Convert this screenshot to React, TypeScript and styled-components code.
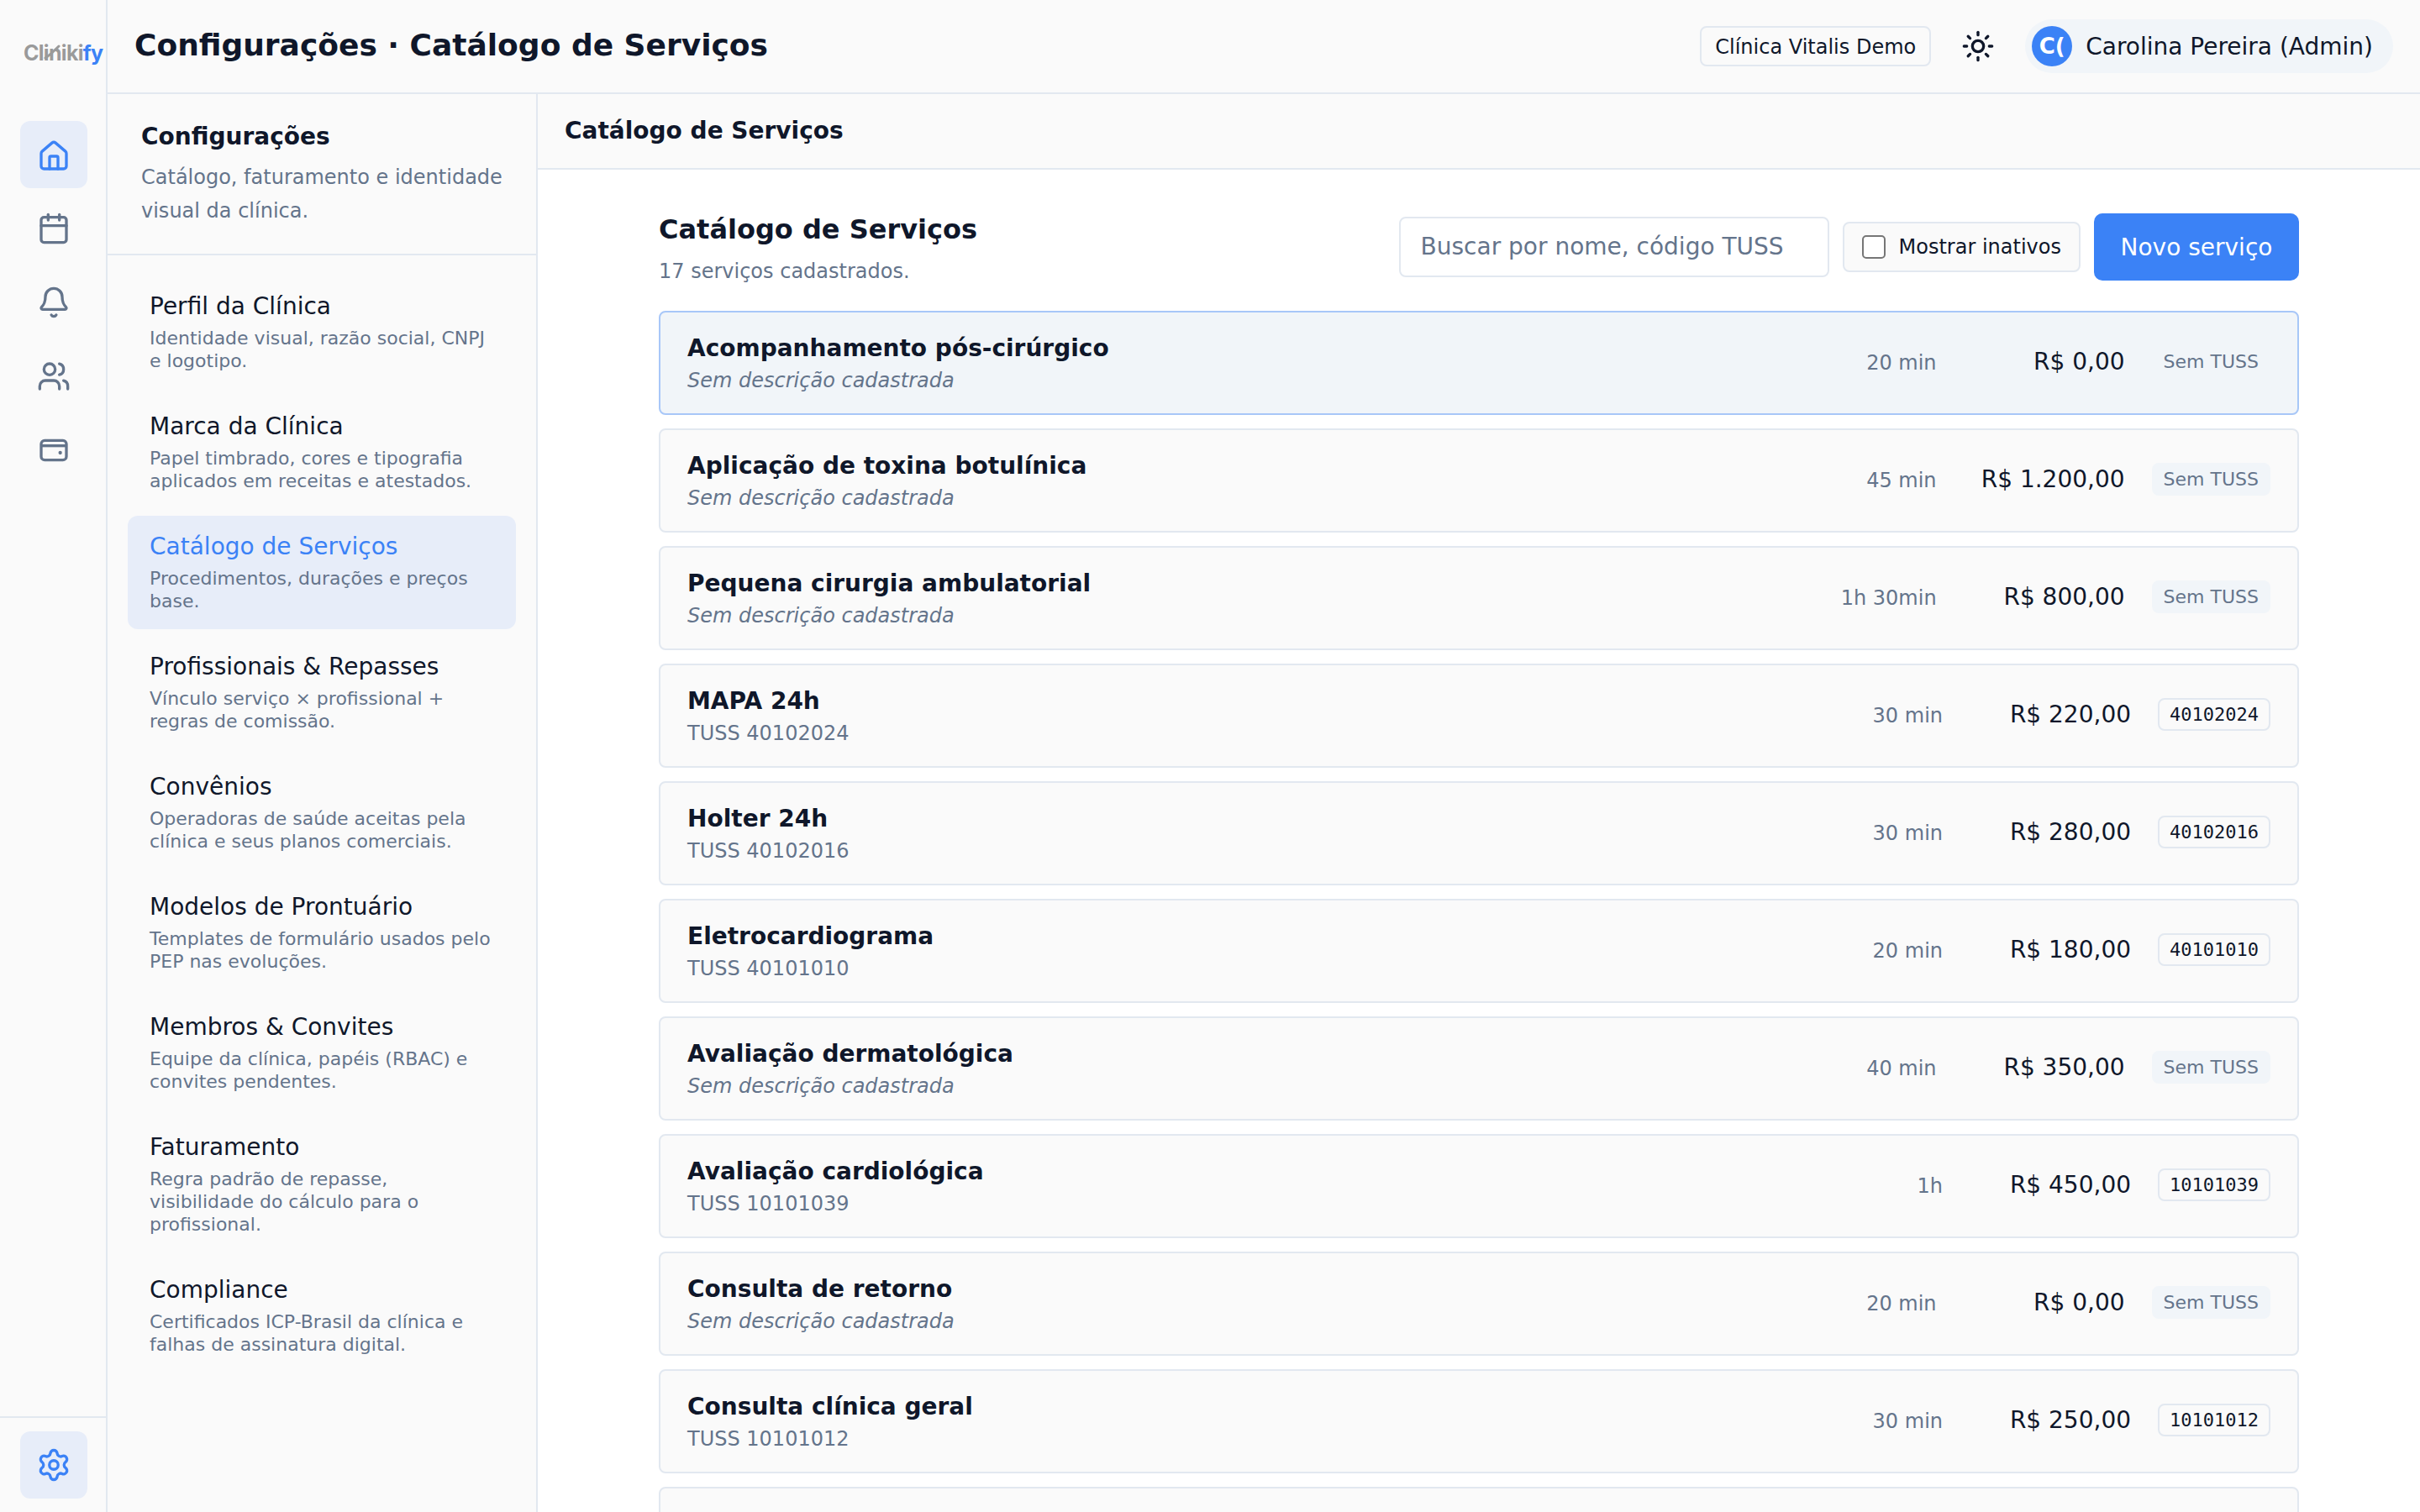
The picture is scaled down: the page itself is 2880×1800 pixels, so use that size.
import React from 'react';
import styled, { createGlobalStyle } from 'styled-components';
import { Bell, Calendar, House, Settings, Sun, Users } from 'lucide-react';

const sections = [
  { title: 'Perfil da Clínica', text: 'Identidade visual, razão social, CNPJ e logotipo.' },
  { title: 'Marca da Clínica', text: 'Papel timbrado, cores e tipografia aplicados em receitas e atestados.' },
  { title: 'Catálogo de Serviços', text: 'Procedimentos, durações e preços base.', active: true },
  { title: 'Profissionais & Repasses', text: 'Vínculo serviço × profissional + regras de comissão.' },
  { title: 'Convênios', text: 'Operadoras de saúde aceitas pela clínica e seus planos comerciais.' },
  { title: 'Modelos de Prontuário', text: 'Templates de formulário usados pelo PEP nas evoluções.' },
  { title: 'Membros & Convites', text: 'Equipe da clínica, papéis (RBAC) e convites pendentes.' },
  { title: 'Faturamento', text: 'Regra padrão de repasse, visibilidade do cálculo para o profissional.' },
  { title: 'Compliance', text: 'Certificados ICP-Brasil da clínica e falhas de assinatura digital.' }
];

const services = [
  { name: 'Acompanhamento pós-cirúrgico', duration: '20 min', price: 'R$ 0,00', selected: true },
  { name: 'Aplicação de toxina botulínica', duration: '45 min', price: 'R$ 1.200,00' },
  { name: 'Pequena cirurgia ambulatorial', duration: '1h 30min', price: 'R$ 800,00' },
  { name: 'MAPA 24h', duration: '30 min', price: 'R$ 220,00', tuss: '40102024' },
  { name: 'Holter 24h', duration: '30 min', price: 'R$ 280,00', tuss: '40102016' },
  { name: 'Eletrocardiograma', duration: '20 min', price: 'R$ 180,00', tuss: '40101010' },
  { name: 'Avaliação dermatológica', duration: '40 min', price: 'R$ 350,00' },
  { name: 'Avaliação cardiológica', duration: '1h', price: 'R$ 450,00', tuss: '10101039' },
  { name: 'Consulta de retorno', duration: '20 min', price: 'R$ 0,00' },
  { name: 'Consulta clínica geral', duration: '30 min', price: 'R$ 250,00', tuss: '10101012' }
];

const iconProps = { size: 40, strokeWidth: 2 };

function CardWalletIcon() {
  return (
    <svg width="40" height="40" viewBox="0 0 24 24" fill="none" stroke="currentColor" strokeWidth="2">
      <rect x="3" y="5" width="18" height="14" rx="2.5" />
      <path d="M3 8.8h18" />
      <circle cx="16.6" cy="13.8" r="1.3" fill="currentColor" stroke="none" />
    </svg>
  );
}

export default function App() {
  return (
    <Shell>
      <GlobalStyle />
      <Rail>
        <Logo>
          Cliniki<LogoAccent>fy</LogoAccent>
          <LogoSwoosh width="20" height="18" viewBox="0 0 20 18">
            <path d="M2 16C7 13 12 8 18 2" fill="none" stroke="#9a9a9a" strokeWidth="3" strokeLinecap="round" />
          </LogoSwoosh>
        </Logo>
        <RailNav>
          <RailButton $active>
            <HomeIcon {...iconProps} />
          </RailButton>
          <RailButton>
            <Calendar {...iconProps} />
          </RailButton>
          <RailButton>
            <Bell {...iconProps} />
          </RailButton>
          <RailButton>
            <Users {...iconProps} />
          </RailButton>
          <RailButton>
            <CardWalletIcon />
          </RailButton>
        </RailNav>
        <RailFooter>
          <RailButton $active>
            <Settings size={42} strokeWidth={1.9} />
          </RailButton>
        </RailFooter>
      </Rail>
      <Workspace>
        <TopBar>
          <PageTitle>Configurações · Catálogo de Serviços</PageTitle>
          <TopActions>
            <ClinicChip>Clínica Vitalis Demo</ClinicChip>
            <ThemeToggle>
              <Sun {...iconProps} />
            </ThemeToggle>
            <UserPill>
              <Avatar>C(</Avatar>
              Carolina Pereira (Admin)
            </UserPill>
          </TopActions>
        </TopBar>
        <Body>
          <Sidebar>
            <SidebarHead>
              <SidebarTitle>Configurações</SidebarTitle>
              <SidebarText>Catálogo, faturamento e identidade visual da clínica.</SidebarText>
            </SidebarHead>
            <SidebarNav>
              {sections.map((s) => (
                <NavItem key={s.title} $active={s.active}>
                  <NavTitle $active={s.active}>{s.title}</NavTitle>
                  <NavText>{s.text}</NavText>
                </NavItem>
              ))}
            </SidebarNav>
          </Sidebar>
          <Main>
            <SubHeader>Catálogo de Serviços</SubHeader>
            <Content>
              <Toolbar>
                <TitleBlock>
                  <CatalogTitle>Catálogo de Serviços</CatalogTitle>
                  <CatalogCount>17 serviços cadastrados.</CatalogCount>
                </TitleBlock>
                <ToolbarActions>
                  <SearchInput placeholder="Buscar por nome, código TUSS" />
                  <InactiveToggle>
                    <CheckBox />
                    Mostrar inativos
                  </InactiveToggle>
                  <PrimaryButton>Novo serviço</PrimaryButton>
                </ToolbarActions>
              </Toolbar>
              <ServiceList>
                {services.map((s) => (
                  <ServiceRow key={s.name} $selected={s.selected}>
                    <ServiceInfo>
                      <ServiceName>{s.name}</ServiceName>
                      {s.tuss ? (
                        <ServiceCode>TUSS {s.tuss}</ServiceCode>
                      ) : (
                        <ServiceEmpty>Sem descrição cadastrada</ServiceEmpty>
                      )}
                    </ServiceInfo>
                    <Duration>{s.duration}</Duration>
                    <Price>{s.price}</Price>
                    {s.tuss ? <TussCode>{s.tuss}</TussCode> : <NoTuss $selected={s.selected}>Sem TUSS</NoTuss>}
                  </ServiceRow>
                ))}
                <ServiceRow />
              </ServiceList>
            </Content>
          </Main>
        </Body>
      </Workspace>
    </Shell>
  );
}

const GlobalStyle = createGlobalStyle`
  html, body {
    margin: 0;
    height: 100%;
    overflow: hidden;
    background: #fff;
  }
  #root {
    height: 100%;
  }
  * {
    box-sizing: border-box;
  }
`;

const Shell = styled.div`
  display: flex;
  width: 2880px;
  height: 1800px;
  overflow: hidden;
  font-family: 'DejaVu Sans', sans-serif;
  color: #0f172a;
`;

const Rail = styled.aside`
  width: 128px;
  flex: none;
  display: flex;
  flex-direction: column;
  background: #fafafa;
  border-right: 2px solid #e2e8f0;
`;

const Logo = styled.div`
  position: relative;
  height: 126px;
  display: flex;
  align-items: center;
  padding-left: 28px;
  font-family: 'Inter', sans-serif;
  font-weight: 700;
  font-size: 25px;
  letter-spacing: -0.7px;
  color: #9a9a9a;
`;

const LogoAccent = styled.span`
  color: #3b82f6;
`;

const LogoSwoosh = styled.svg`
  position: absolute;
  left: 52px;
  top: 53px;
`;

const RailNav = styled.nav`
  flex: 1;
  display: flex;
  flex-direction: column;
  gap: 8px;
  padding: 18px 0 0 24px;
`;

const RailButton = styled.div<{ $active?: boolean }>`
  width: 80px;
  height: 80px;
  border-radius: 12px;
  display: flex;
  align-items: center;
  justify-content: center;
  background: ${(p) => (p.$active ? '#e7edf9' : 'transparent')};
  color: ${(p) => (p.$active ? '#3b82f6' : '#64748b')};
`;

const HomeIcon = styled(House)`
  margin-top: 4px;
`;

const RailFooter = styled.div`
  padding: 16px 0 16px 24px;
  border-top: 2px solid #e2e8f0;
`;

const Workspace = styled.div`
  flex: 1;
  min-width: 0;
  display: flex;
  flex-direction: column;
`;

const TopBar = styled.header`
  height: 112px;
  flex: none;
  display: flex;
  align-items: center;
  justify-content: space-between;
  padding: 0 32px;
  background: #fafafa;
  border-bottom: 2px solid #e2e8f0;
`;

const PageTitle = styled.h1`
  margin: 0 0 3px;
  font-size: 36px;
  font-weight: 700;
`;

const TopActions = styled.div`
  display: flex;
  align-items: center;
  gap: 16px;
`;

const ClinicChip = styled.div`
  padding: 9px 16px 7px;
  border: 2px solid #e2e8f0;
  border-radius: 8px;
  font-size: 24px;
`;

const ThemeToggle = styled.div`
  width: 80px;
  height: 80px;
  display: flex;
  align-items: center;
  justify-content: center;
  color: #0f172a;
`;

const UserPill = styled.div`
  display: flex;
  align-items: center;
  gap: 16px;
  padding: 8px 24px 8px 8px;
  background: #f1f5f9;
  border-radius: 999px;
  font-size: 28px;
`;

const Avatar = styled.div`
  width: 48px;
  height: 48px;
  border-radius: 50%;
  background: #3b82f6;
  color: #fff;
  font-size: 26px;
  font-weight: 700;
  display: flex;
  align-items: center;
  justify-content: center;
`;

const Body = styled.div`
  flex: 1;
  min-height: 0;
  display: flex;
`;

const Sidebar = styled.aside`
  width: 512px;
  flex: none;
  background: #fafafa;
  border-right: 2px solid #e2e8f0;
`;

const SidebarHead = styled.div`
  padding: 34px 40px 31px;
  border-bottom: 2px solid #e2e8f0;
`;

const SidebarTitle = styled.h2`
  margin: 0 0 12px;
  font-size: 28px;
  line-height: 33px;
  font-weight: 700;
`;

const SidebarText = styled.p`
  margin: 0;
  font-size: 24px;
  line-height: 40px;
  color: #64748b;
`;

const SidebarNav = styled.nav`
  display: flex;
  flex-direction: column;
  gap: 8px;
  padding: 24px;
`;

const NavItem = styled.div<{ $active?: boolean }>`
  padding: 20px 26px;
  border-radius: 12px;
  background: ${(p) => (p.$active ? '#e7edf9' : 'transparent')};
`;

const NavTitle = styled.div<{ $active?: boolean }>`
  font-size: 28px;
  line-height: 34px;
  color: ${(p) => (p.$active ? '#3b82f6' : '#0f172a')};
`;

const NavText = styled.div`
  margin-top: 7px;
  font-size: 22px;
  line-height: 27px;
  color: #64748b;
`;

const Main = styled.main`
  flex: 1;
  min-width: 0;
  display: flex;
  flex-direction: column;
`;

const SubHeader = styled.div`
  height: 90px;
  flex: none;
  display: flex;
  align-items: center;
  padding: 0 32px 2px;
  background: #fafafa;
  border-bottom: 2px solid #e2e8f0;
  font-size: 28px;
  font-weight: 700;
`;

const Content = styled.div`
  width: 1952px;
  margin: 0 auto;
  padding-top: 52px;
`;

const Toolbar = styled.div`
  height: 80px;
  display: flex;
  align-items: center;
  justify-content: space-between;
  margin-bottom: 36px;
`;

const TitleBlock = styled.div`
  padding-top: 3px;
`;

const CatalogTitle = styled.h2`
  margin: 0 0 17px;
  font-size: 32px;
  font-weight: 700;
`;

const CatalogCount = styled.div`
  font-size: 24px;
  color: #64748b;
`;

const ToolbarActions = styled.div`
  display: flex;
  align-items: center;
  gap: 16px;
`;

const SearchInput = styled.input`
  width: 512px;
  height: 72px;
  padding: 0 24px 2px;
  border: 2px solid #e2e8f0;
  border-radius: 8px;
  background: #fff;
  font-family: inherit;
  font-size: 28px;
  color: #0f172a;

  &::placeholder {
    color: #64748b;
    opacity: 1;
  }
`;

const InactiveToggle = styled.label`
  height: 60px;
  display: flex;
  align-items: center;
  gap: 16px;
  padding: 0 21px;
  background: #fafafa;
  border: 2px solid #e2e8f0;
  border-radius: 8px;
  font-size: 24px;
`;

const CheckBox = styled.span`
  width: 28px;
  height: 28px;
  border: 2px solid #767676;
  border-radius: 5px;
  background: #fff;
`;

const PrimaryButton = styled.button`
  width: 244px;
  height: 80px;
  padding: 0;
  border: 0;
  border-radius: 10px;
  background: #3b82f6;
  color: #fff;
  font-family: inherit;
  font-size: 28px;
`;

const ServiceList = styled.div`
  display: flex;
  flex-direction: column;
  gap: 16px;
`;

const ServiceRow = styled.div<{ $selected?: boolean }>`
  height: 124px;
  flex: none;
  display: flex;
  align-items: center;
  padding: 0 32px;
  border-radius: 8px;
  border: 2px solid ${(p) => (p.$selected ? '#a8c7f8' : '#e2e8f0')};
  background: ${(p) => (p.$selected ? '#f1f5f9' : '#fafafa')};
`;

const ServiceInfo = styled.div`
  flex: 1;
  min-width: 0;
`;

const ServiceName = styled.div`
  font-size: 28px;
  line-height: 33px;
  font-weight: 700;
`;

const ServiceCode = styled.div`
  margin-top: 8px;
  font-size: 24px;
  line-height: 28px;
  color: #64748b;
`;

const ServiceEmpty = styled(ServiceCode)`
  font-style: italic;
`;

const Duration = styled.div`
  font-size: 24px;
  color: #64748b;
  margin-right: 22px;
`;

const Price = styled.div`
  width: 202px;
  text-align: right;
  font-size: 28px;
  margin: 0 32px 3px 0;
`;

const TussCode = styled.div`
  margin-bottom: 3px;
  padding: 4px 12px;
  border: 2px solid #e2e8f0;
  border-radius: 8px;
  font-family: 'DejaVu Sans Mono', monospace;
  font-size: 22px;
  line-height: 27px;
`;

const NoTuss = styled.div<{ $selected?: boolean }>`
  margin-bottom: 3px;
  padding: 4px 12px;
  border: 2px solid ${(p) => (p.$selected ? 'transparent' : '#f1f5f9')};
  border-radius: 8px;
  background: ${(p) => (p.$selected ? 'transparent' : '#f1f5f9')};
  font-size: 22px;
  line-height: 27px;
  color: #64748b;
`;
